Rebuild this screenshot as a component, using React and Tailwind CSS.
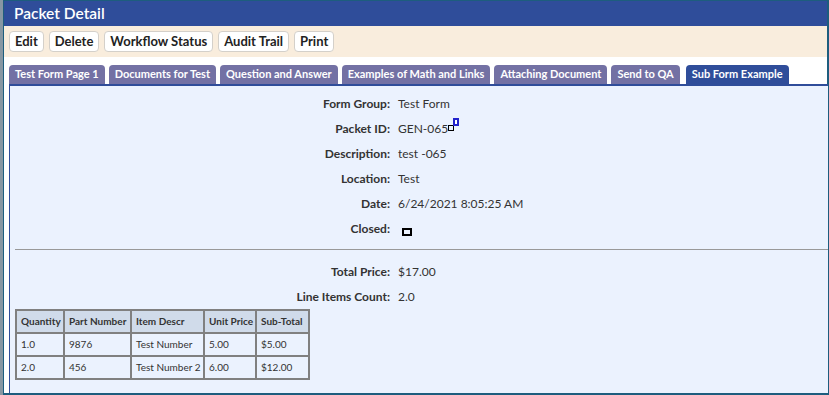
import React from 'react'

const TABS = [
  'Test Form Page 1',
  'Documents for Test',
  'Question and Answer',
  'Examples of Math and Links',
  'Attaching Document',
  'Send to QA',
  'Sub Form Example',
]

const FIELDS = [
  ['Form Group:', 'Test Form'],
  ['Packet ID:', 'GEN-065'],
  ['Description:', 'test -065'],
  ['Location:', 'Test'],
  ['Date:', '6/24/2021 8:05:25 AM'],
  ['Closed:', null],
]

const ITEMS = [
  ['1.0', '9876', 'Test Number', '5.00', '$5.00'],
  ['2.0', '456', 'Test Number 2', '6.00', '$12.00'],
]

const COL_W = ['w-[48px]', 'w-[67px]', 'w-[73px]', 'w-[52px]', 'w-[53px]']

function Row({ label, children }) {
  return (
    <div className="grid h-[25px] grid-cols-[380px_1fr] items-center gap-2 whitespace-nowrap">
      <div className="text-right font-bold text-[#333]">{label}</div>
      <div className="text-[#333]">{children}</div>
    </div>
  )
}

export default function App() {
  return (
    <div
      className="flex h-[395px] w-[829px] overflow-hidden bg-white text-[12px]"
      style={{ fontFamily: 'Lato, "Noto Sans", sans-serif' }}
    >
      {/* window edge */}
      <div className="w-[3px] shrink-0 bg-[#8797a3]" />
      <div className="flex min-w-0 flex-1 flex-col border-t border-r-2 border-b-2 border-l border-[#1d5d7e]">
        {/* title */}
        <div className="flex h-[25px] shrink-0 items-center bg-[#2f4d9a] px-[10px] text-[15.5px] font-semibold text-white">
          Packet Detail
        </div>

        {/* toolbar */}
        <div className="flex h-[31px] shrink-0 items-center gap-[5px] bg-[#f9eddd] px-[5px]">
          {['Edit', 'Delete', 'Workflow Status', 'Audit Trail', 'Print'].map((b) => (
            <button
              key={b}
              className="h-[21px] whitespace-nowrap rounded-[4px] border border-[#d4d0ca] bg-white px-[5px] text-[13px] font-bold leading-none text-[#222]"
            >
              {b}
            </button>
          ))}
        </div>

        {/* tabs */}
        <div className="flex shrink-0 items-end gap-[4px] px-[5px] pt-[8px]">
          {TABS.map((t, i) => {
            const active = i === TABS.length - 1
            return (
              <div
                key={t}
                className={`flex h-[19px] items-center whitespace-nowrap rounded-t-[4px] px-[6px] text-[11px] font-bold text-white ${
                  active ? 'ml-[2px] bg-[#2f4d9a]' : 'bg-[#7371a4]'
                }`}
              >
                {t}
              </div>
            )
          })}
        </div>

        {/* panel */}
        <div className="mx-[5px] -mr-px flex-1 border-t-2 border-l border-[#2f4d9a] bg-[#ebf2fe] pt-[5px]">
          {FIELDS.map(([label, value]) => (
            <Row key={label} label={label}>
              {label === 'Packet ID:' ? (
                <span className="relative">
                  {value}
                  <span className="relative -top-[1px] inline-block h-[6px] w-[6px] border border-black align-middle" />
                  <span className="absolute -top-[3px] -right-[5px] inline-block h-[8px] w-[6px] border-2 border-[#2222cc] bg-white" />
                </span>
              ) : value === null ? (
                <span className="relative top-[3px] ml-[4px] inline-block h-[8px] w-[10px] border-2 border-black" />
              ) : (
                value
              )}
            </Row>
          ))}

          <div className="mt-[8px] ml-[5px] border-t border-[#999]" />

          <div className="mt-[9px]">
            <Row label="Total Price:">$17.00</Row>
            <Row label="Line Items Count:">2.0</Row>
          </div>

          <table className="ml-[5px] w-[293px] table-fixed border-collapse border-2 border-[#808080] text-[10px] whitespace-nowrap text-[#333]">
            <thead>
              <tr className="h-[23px] bg-[#d0dbea]">
                {['Quantity', 'Part Number', 'Item Descr', 'Unit Price', 'Sub-Total'].map((h, j) => (
                  <th key={h} className={`overflow-hidden border-2 border-[#808080] px-[4px] text-left font-bold ${COL_W[j]}`}>
                    {h}
                  </th>
                ))}
              </tr>
            </thead>
            <tbody>
              {ITEMS.map((r) => (
                <tr key={r[0]} className="h-[23px]">
                  {r.map((c, j) => (
                    <td key={j} className="overflow-hidden border-2 border-[#808080] px-[4px]">
                      {c}
                    </td>
                  ))}
                </tr>
              ))}
            </tbody>
          </table>
        </div>
      </div>
    </div>
  )
}
